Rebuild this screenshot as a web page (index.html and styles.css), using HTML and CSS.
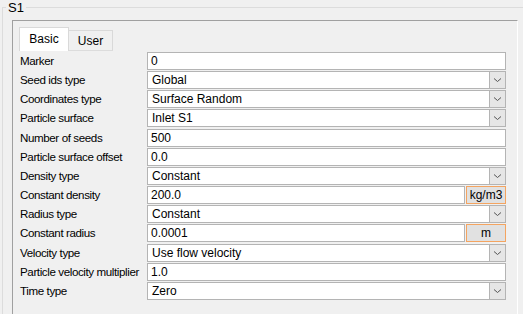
FILE: index.html
```html
<!DOCTYPE html>
<html lang="en">
<head>
    <meta charset="UTF-8">
    <title>S1</title>
    <link rel="stylesheet" href="styles.css">
</head>
<body>
    <div class="group">
        <span class="group-title">S1</span>
        <div class="frame">
            <div class="tabs">
                <div class="tab active">Basic</div>
                <div class="tab">User</div>
            </div>
            <div class="form">
                <div class="row">
                    <label>Marker</label>
                    <div class="field">0</div>
                </div>
                <div class="row">
                    <label>Seed ids type</label>
                    <div class="field combo">Global<span class="drop"><svg width="9" height="6" viewBox="0 0 9 6"><path d="M1 1.5 4.5 4.5 8 1.5" fill="none" stroke="#555" stroke-width="1"/></svg></span></div>
                </div>
                <div class="row">
                    <label>Coordinates type</label>
                    <div class="field combo">Surface Random<span class="drop"><svg width="9" height="6" viewBox="0 0 9 6"><path d="M1 1.5 4.5 4.5 8 1.5" fill="none" stroke="#555" stroke-width="1"/></svg></span></div>
                </div>
                <div class="row">
                    <label>Particle surface</label>
                    <div class="field combo">Inlet S1<span class="drop"><svg width="9" height="6" viewBox="0 0 9 6"><path d="M1 1.5 4.5 4.5 8 1.5" fill="none" stroke="#555" stroke-width="1"/></svg></span></div>
                </div>
                <div class="row">
                    <label>Number of seeds</label>
                    <div class="field">500</div>
                </div>
                <div class="row">
                    <label>Particle surface offset</label>
                    <div class="field">0.0</div>
                </div>
                <div class="row">
                    <label>Density type</label>
                    <div class="field combo">Constant<span class="drop"><svg width="9" height="6" viewBox="0 0 9 6"><path d="M1 1.5 4.5 4.5 8 1.5" fill="none" stroke="#555" stroke-width="1"/></svg></span></div>
                </div>
                <div class="row">
                    <label>Constant density</label>
                    <div class="with-unit">
                        <div class="field">200.0</div>
                        <div class="unit">kg/m3</div>
                    </div>
                </div>
                <div class="row">
                    <label>Radius type</label>
                    <div class="field combo">Constant<span class="drop"><svg width="9" height="6" viewBox="0 0 9 6"><path d="M1 1.5 4.5 4.5 8 1.5" fill="none" stroke="#555" stroke-width="1"/></svg></span></div>
                </div>
                <div class="row">
                    <label>Constant radius</label>
                    <div class="with-unit">
                        <div class="field">0.0001</div>
                        <div class="unit">m</div>
                    </div>
                </div>
                <div class="row">
                    <label>Velocity type</label>
                    <div class="field combo">Use flow velocity<span class="drop"><svg width="9" height="6" viewBox="0 0 9 6"><path d="M1 1.5 4.5 4.5 8 1.5" fill="none" stroke="#555" stroke-width="1"/></svg></span></div>
                </div>
                <div class="row">
                    <label>Particle velocity multiplier</label>
                    <div class="field">1.0</div>
                </div>
                <div class="row">
                    <label>Time type</label>
                    <div class="field combo">Zero<span class="drop"><svg width="9" height="6" viewBox="0 0 9 6"><path d="M1 1.5 4.5 4.5 8 1.5" fill="none" stroke="#555" stroke-width="1"/></svg></span></div>
                </div>
            </div>
        </div>
    </div>
</body>
</html>
```

FILE: styles.css
```css
body {
    margin: 0;
    background: #f0f0f0;
    font-family: "Liberation Sans", Arial, sans-serif;
    font-size: 12px;
    color: #000;
    overflow: hidden;
    height: 314px;
}

.group {
    position: relative;
    margin: 7px 0 0 2px;
    border-top: 1px solid #dcdcdc;
    border-left: 1px solid #dcdcdc;
    height: 320px;
}

.group-title {
    position: absolute;
    top: -8px;
    left: 3px;
    padding: 0 2px;
    background: #f0f0f0;
    font-size: 13px;
    line-height: 15px;
}

.frame {
    margin: 12px 0 0 9px;
    width: 498px;
    height: 300px;
    border-top: 1px solid #a0a0a0;
    border-left: 1px solid #a0a0a0;
    border-right: 1px solid #fff;
    padding: 6px 0 0 6px;
}

.tabs {
    display: flex;
    align-items: flex-end;
    height: 24px;
}

.tab {
    box-sizing: border-box;
    height: 21px;
    padding: 3px 0 0 0;
    width: 44px;
    text-align: center;
    background: #f0f0f0;
    border: 1px solid #d9d9d9;
    border-bottom: 1px solid #dcdcdc;
    border-left: none;
}

.tab.active {
    width: 50px;
    height: 24px;
    background: #fff;
    border: 1px solid #d9d9d9;
    border-bottom: none;
    padding-top: 4px;
}

.form {
    display: flex;
    flex-direction: column;
    gap: 1.17px;
    padding-top: 1px;
    margin-left: 1px;
}

.row {
    display: flex;
    align-items: center;
    height: 18px;
}

.row label {
    width: 127px;
    flex: none;
    line-height: 18px;
    white-space: nowrap;
    letter-spacing: -0.4px;
    font-size: 11.6px;
}

.field {
    box-sizing: border-box;
    position: relative;
    width: 359px;
    height: 18px;
    line-height: 16px;
    padding-left: 3px;
    background: #fff;
    border: 1px solid #b4b4b4;
}

.combo {
    padding-left: 4px;
}

.drop {
    position: absolute;
    top: 0;
    right: 0;
    width: 16px;
    height: 16px;
    box-sizing: border-box;
    background: #e6e6e6;
    border-left: 1px solid #b4b4b4;
    display: flex;
    align-items: center;
    justify-content: center;
}

.with-unit {
    display: flex;
    gap: 1px;
}

.with-unit .field {
    width: 318px;
}

.unit {
    box-sizing: border-box;
    width: 40px;
    height: 18px;
    line-height: 16px;
    text-align: center;
    background: #e1e1e1;
    border: 1px solid #f4a460;
}
```
